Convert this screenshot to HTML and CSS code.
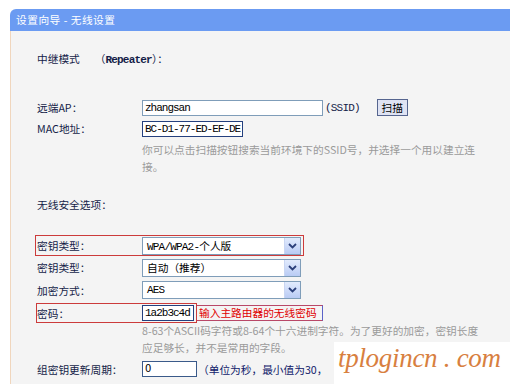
FILE: index.html
```html
<!DOCTYPE html>
<html>
<head>
<meta charset="utf-8">
<link rel="stylesheet" href="styles.css">
</head>
<body>
<div class="panel">
  <div class="hdr">设置向导 - 无线设置</div>
  <div class="body">
    <div class="sec sec1">中继模式<span class="rep">（<span class="mono">Repeater</span>）：</span></div>
    <div class="row r-ap">
      <span class="lbl">远端AP：</span>
      <span class="field f-ap">zhangsan</span>
      <span class="ssid mono">(SSID)</span>
      <span class="btn">扫描</span>
    </div>
    <div class="row r-mac">
      <span class="lbl">MAC地址：</span>
      <span class="field f-mac">BC-D1-77-ED-EF-DE</span>
    </div>
    <div class="help help1">你可以点击扫描按钮搜索当前环境下的SSID号，并选择一个用以建立连<br>接。</div>
    <div class="sec sec2">无线安全选项：</div>
    <div class="row red red1">
      <span class="lbl">密钥类型：</span>
      <span class="sel"><span class="txt mono">WPA/WPA2-<span class="cjk">个人版</span></span><span class="arr"><svg width="9" height="6" viewBox="0 0 9 6"><path d="M1 1 L4.5 4.5 L8 1" fill="none" stroke="#2b3f7a" stroke-width="1.8"/></svg></span></span>
    </div>
    <div class="row r-type">
      <span class="lbl">密钥类型：</span>
      <span class="sel"><span class="txt"><span class="cjk">自动（推荐）</span></span><span class="arr"><svg width="9" height="6" viewBox="0 0 9 6"><path d="M1 1 L4.5 4.5 L8 1" fill="none" stroke="#2b3f7a" stroke-width="1.8"/></svg></span></span>
    </div>
    <div class="row r-enc">
      <span class="lbl">加密方式：</span>
      <span class="sel"><span class="txt mono">AES</span><span class="arr"><svg width="9" height="6" viewBox="0 0 9 6"><path d="M1 1 L4.5 4.5 L8 1" fill="none" stroke="#2b3f7a" stroke-width="1.8"/></svg></span></span>
    </div>
    <div class="row r-pw">
      <div class="red red2">
        <span class="lbl">密码：</span>
        <span class="field f-pw">1a2b3c4d</span>
      </div>
      <span class="note">输入主路由器的无线密码</span>
    </div>
    <div class="help help2">8-63个ASCII码字符或8-64个十六进制字符。为了更好的加密，密钥长度<br>应足够长，并不是常用的字段。</div>
    <div class="row r-gk">
      <span class="lbl">组密钥更新周期：</span>
      <span class="field f-gk">0</span>
      <span class="unit">（单位为秒，最小值为30，</span>
    </div>
  </div>
</div>
<div class="wm">tplogincn . com</div>
</body>
</html>
```

FILE: styles.css
```css
html, body {
  margin: 0;
  padding: 0;
  background: #fff;
  overflow: hidden;
  width: 510px;
  height: 384px;
}
body {
  font-family: "Noto Sans CJK SC", "Liberation Sans", sans-serif;
  font-size: 10.7px;
  color: #141d48;
  position: relative;
}
.panel {
  margin: 9px 0 0 10px;
  width: 520px;
}
.hdr {
  height: 22px;
  line-height: 22px;
  background: #6b9bf2;
  color: #fff;
  padding-left: 6px;
  border-top-left-radius: 6px;
  letter-spacing: 0.5px;
}
.body {
  background: #f4f4f4;
  border-left: 1px solid #f0d6bd;
  padding-left: 26px;
  height: 360px;
  overflow: hidden;
}
.mono {
  font-family: "Liberation Mono", "Noto Sans CJK SC", monospace;
  font-size: 11px;
  letter-spacing: -0.8px;
}
.cjk {
  font-family: "Noto Sans CJK SC", sans-serif;
  font-size: 10.7px;
  letter-spacing: 0;
}
.sec {
  height: 22px;
  line-height: 22px;
}
.sec1 { padding-top: 17px; }
.rep { margin-left: 15px; }
.rep .mono { font-weight: bold; }
.row {
  display: flex;
  align-items: center;
}
.lbl {
  width: 105px;
  flex: none;
}
.field {
  box-sizing: border-box;
  height: 16px;
  line-height: 14px;
  border: 1px solid #7f9db9;
  background: #fff;
  padding: 0 2px;
  font-family: "Liberation Mono", monospace;
  font-size: 11px;
  letter-spacing: -1px;
  color: #000;
  white-space: nowrap;
  overflow: hidden;
}
.r-ap { margin-top: 27px; height: 21px; }
.f-ap { width: 181px; }
.ssid { margin-left: 2px; color: #141d48; }
.btn {
  margin-left: 17px;
  box-sizing: border-box;
  width: 31px;
  height: 17px;
  line-height: 15px;
  text-align: center;
  border: 1px solid #56658f;
  background: #dfe3f3;
  color: #000;
}
.r-mac { height: 21px; }
.f-mac { width: 101px; border-color: #24407e; }
.help {
  color: #9a9a9a;
  line-height: 17px;
  margin-left: 105px;
}
.help1 { margin-top: 2px; }
.sec2 { margin-top: 19px; }
.red {
  box-sizing: border-box;
  border: 1px solid #cc3b3b;
}
.red1 {
  margin-top: 19px;
  margin-left: -2px;
  padding-left: 1px;
  width: 269px;
  height: 21px;
}
.sel {
  box-sizing: border-box;
  width: 159px;
  height: 18px;
  border: 1px solid #7f9db9;
  background: #fff;
  display: flex;
  color: #000;
}
.sel .txt {
  flex: 1;
  padding-left: 4px;
  line-height: 16px;
}
.sel .arr {
  width: 15px;
  background: linear-gradient(#e2ebfd, #b9cbf4);
  border-left: 1px solid #c9d6f3;
  display: flex;
  align-items: center;
  justify-content: center;
}
.r-type { height: 23px; }
.r-enc { height: 22px; }
.r-pw { margin-top: 2px; height: 20px; align-items: stretch; }
.red2 {
  margin-left: -1px;
  width: 161px;
  display: flex;
  align-items: center;
}
.f-pw { width: 52px; border-color: #24407e; }
.note {
  box-sizing: border-box;
  margin: 2px 0;
  padding: 0 2px;
  border: 1px solid #b94868;
  border-left: none;
  border-right-color: #5a62c8;
  color: #e00000;
  line-height: 14px;
  width: 126px;
}
.help2 { margin-top: -1px; }
.r-gk { margin-top: 2px; height: 22px; }
.f-gk {
  width: 55px;
  border-color: #3a5a8a;
  font-family: "DejaVu Sans", sans-serif;
  font-size: 10px;
  letter-spacing: 0;
}
.unit { margin-left: 1px; color: #10206a; white-space: nowrap; }
.wm {
  position: absolute;
  left: 334px;
  top: 342px;
  width: 176px;
  height: 42px;
  background: #fff;
  color: #d8803f;
  font-family: "Liberation Serif", serif;
  font-style: italic;
  font-size: 27px;
  line-height: 32px;
  padding-left: 4px;
  box-sizing: border-box;
  white-space: nowrap;
  letter-spacing: -0.3px;
}
```
